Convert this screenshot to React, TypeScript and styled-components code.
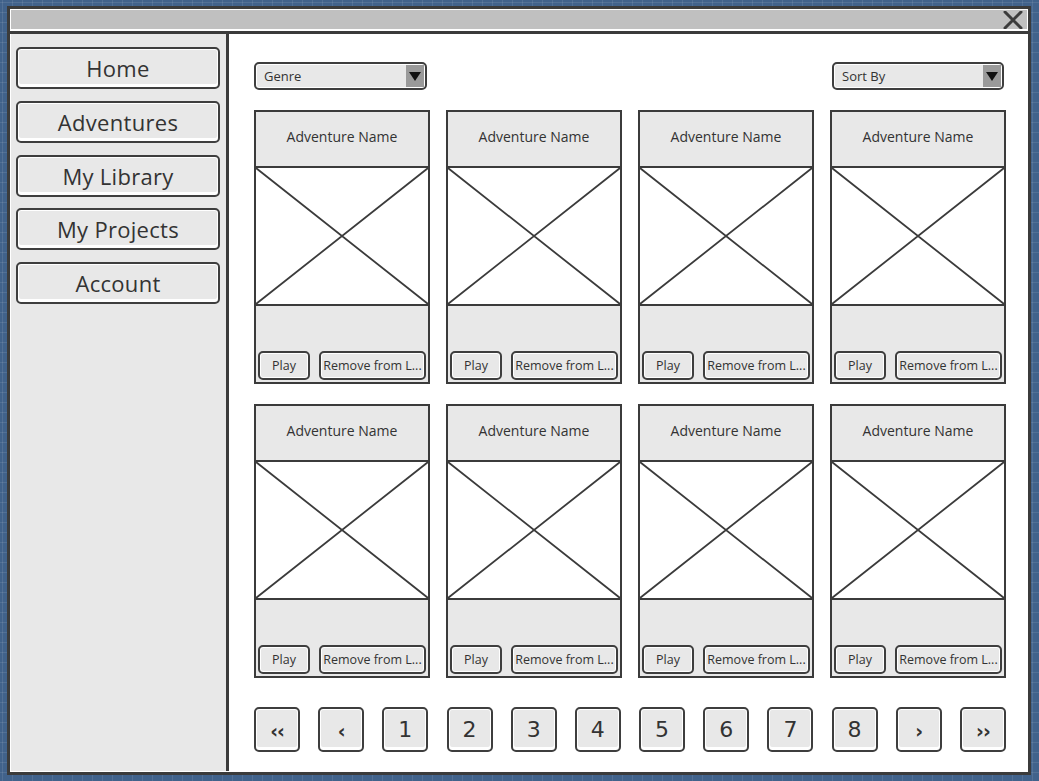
import React from "react";
import styled, { createGlobalStyle } from "styled-components";

const Global = createGlobalStyle`
  html, body { margin: 0; padding: 0; }
  body {
    width: 1039px;
    height: 781px;
    overflow: hidden;
    font-family: "Open Sans", "Liberation Sans", sans-serif;
    color: #333;
    background-color: #41628b;
    background-image:
      linear-gradient(rgba(255,255,255,0.09) 1px, transparent 1px),
      linear-gradient(90deg, rgba(255,255,255,0.09) 1px, transparent 1px);
    background-size: 10px 10px;
    background-position: 2px 2px;
  }
`;

const Window = styled.div`
  position: relative;
  margin: 6px 0 0 7px;
  width: 1024px;
  height: 769px;
  box-sizing: border-box;
  border: 3px solid #3b3b3b;
  background: #fff;
  display: flex;
  flex-direction: column;
`;

const TitleBar = styled.div`
  height: 19px;
  margin: 1px 1px 2px;
  background: #c0c0c0;
  display: flex;
  justify-content: flex-end;
  align-items: center;
  padding-right: 4px;
`;

const Body = styled.div`
  flex: 1;
  display: flex;
  border-top: 3px solid #3b3b3b;
  min-height: 0;
`;

const Sidebar = styled.div`
  width: 218px;
  flex: 0 0 218px;
  box-sizing: border-box;
  margin: 0 0 1px 1px;
  background: #e8e8e8;
  border-right: 3px solid #3b3b3b;
  padding: 13px 6px 0 5px;
  display: flex;
  flex-direction: column;
  gap: 11.75px;
`;

const NavButton = styled.div`
  height: 42px;
  flex: 0 0 42px;
  box-sizing: border-box;
  border: 2px solid #3e3e3e;
  border-radius: 5px;
  box-shadow: inset 0 0 0 1px #fff, inset 0 -2px 0 1px #fff;
  background: #e8e8e8;
  display: flex;
  align-items: center;
  justify-content: center;
  font-size: 22px;
  letter-spacing: 0.3px;
  color: #333;
`;

const Main = styled.div`
  flex: 1;
  padding: 28px 22px 0 25px;
  display: flex;
  flex-direction: column;
`;

const FilterRow = styled.div`
  display: flex;
  justify-content: space-between;
  height: 28px;
  padding-right: 2px;
`;

const Select = styled.div<{ $w: number }>`
  width: ${(p) => p.$w}px;
  height: 28px;
  box-sizing: border-box;
  border: 2px solid #3e3e3e;
  border-radius: 5px;
  box-shadow: inset 0 0 0 1px #fff;
  background: #e8e8e8;
  display: flex;
  align-items: stretch;
  overflow: hidden;
`;

const SelectLabel = styled.div`
  flex: 1;
  display: flex;
  align-items: center;
  padding-left: 8px;
  font-size: 13px;
  color: #333;
`;

const SelectArrow = styled.div`
  width: 18px;
  margin: 1px 1px 1px 0;
  background: #9a9a9a;
  display: flex;
  align-items: center;
  justify-content: center;
  &::after {
    content: "";
    border-left: 6px solid transparent;
    border-right: 6px solid transparent;
    border-top: 9px solid #111;
  }
`;

const Grid = styled.div`
  margin-top: 20px;
  display: grid;
  grid-template-columns: repeat(4, 1fr);
  column-gap: 16px;
  row-gap: 20px;
`;

const Card = styled.div`
  height: 274px;
  box-sizing: border-box;
  border: 2px solid #3b3b3b;
  display: flex;
  flex-direction: column;
`;

const CardHeader = styled.div`
  box-sizing: border-box;
  height: 56px;
  background: #e8e8e8;
  border-bottom: 2px solid #3b3b3b;
  display: flex;
  align-items: center;
  justify-content: center;
  padding-bottom: 6px;
  font-size: 14px;
  color: #333;
`;

const CardImage = styled.div`
  height: 136px;
  background: #fff;
  border-bottom: 2px solid #3b3b3b;
`;

const CardFooter = styled.div`
  flex: 1;
  background: #e8e8e8;
  display: flex;
  align-items: flex-end;
  gap: 9px;
  padding: 0 2px 2px;
`;

const SmallButton = styled.div<{ $w: number }>`
  width: ${(p) => p.$w}px;
  height: 29px;
  box-sizing: border-box;
  border: 2px solid #3e3e3e;
  border-radius: 5px;
  box-shadow: inset 0 0 0 1px #fff;
  background: #e8e8e8;
  display: flex;
  align-items: center;
  justify-content: center;
  font-size: 12.5px;
  color: #333;
  white-space: nowrap;
  overflow: hidden;
`;

const Pager = styled.div`
  margin-top: 29px;
  display: flex;
  justify-content: space-between;
`;

const PageButton = styled.div<{ $small?: boolean }>`
  width: 46px;
  height: 45px;
  box-sizing: border-box;
  border: 2px solid #3e3e3e;
  border-radius: 5px;
  box-shadow: inset 0 0 0 1px #fff, inset 0 -2px 0 1px #fff;
  background: #e8e8e8;
  display: flex;
  align-items: center;
  justify-content: center;
  font-family: "DejaVu Sans", "Open Sans", sans-serif;
  font-size: ${(p) => (p.$small ? "19px" : "22px")};
  font-weight: ${(p) => (p.$small ? 700 : 400)};
  letter-spacing: ${(p) => (p.$small ? "-1px" : "0")};
  color: #333;
  padding-top: ${(p) => (p.$small ? "2px" : "0")};
`;

const CloseIcon = () => (
  <svg width="20" height="18" viewBox="0 0 20 18">
    <path d="M2 1 L18 17 M18 1 L2 17" stroke="#3b3b3b" strokeWidth="3" strokeLinecap="round" />
  </svg>
);

const Placeholder = () => (
  <svg width="100%" height="100%" viewBox="0 0 172 136" preserveAspectRatio="none">
    <path d="M0 0 L172 136 M172 0 L0 136" stroke="#3b3b3b" strokeWidth="1.8" />
  </svg>
);

const nav = ["Home", "Adventures", "My Library", "My Projects", "Account"];
const pages = ["‹‹", "‹", "1", "2", "3", "4", "5", "6", "7", "8", "›", "››"];

export default function App() {
  return (
    <>
      <Global />
      <Window>
        <TitleBar>
          <CloseIcon />
        </TitleBar>
        <Body>
          <Sidebar>
            {nav.map((n) => (
              <NavButton key={n}>{n}</NavButton>
            ))}
          </Sidebar>
          <Main>
            <FilterRow>
              <Select $w={173}>
                <SelectLabel>Genre</SelectLabel>
                <SelectArrow />
              </Select>
              <Select $w={172}>
                <SelectLabel>Sort By</SelectLabel>
                <SelectArrow />
              </Select>
            </FilterRow>
            <Grid>
              {Array.from({ length: 8 }).map((_, i) => (
                <Card key={i}>
                  <CardHeader>Adventure Name</CardHeader>
                  <CardImage>
                    <Placeholder />
                  </CardImage>
                  <CardFooter>
                    <SmallButton $w={52}>Play</SmallButton>
                    <SmallButton $w={107}>Remove from L...</SmallButton>
                  </CardFooter>
                </Card>
              ))}
            </Grid>
            <Pager>
              {pages.map((p, i) => (
                <PageButton key={i} $small={p.includes("‹") || p.includes("›")}>
                  {p}
                </PageButton>
              ))}
            </Pager>
          </Main>
        </Body>
      </Window>
    </>
  );
}
